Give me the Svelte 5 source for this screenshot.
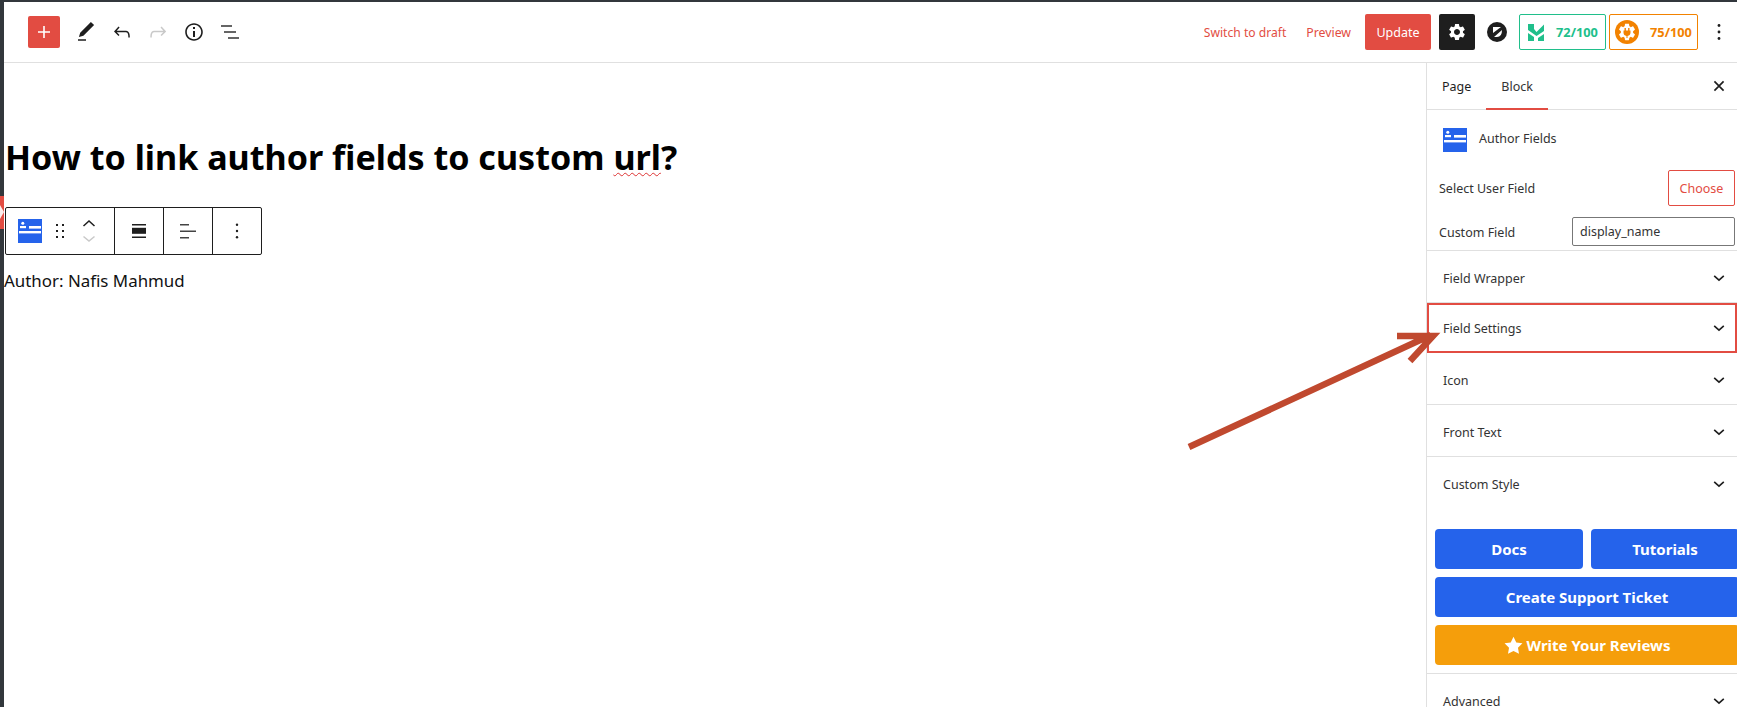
<script>
  const panels = ['Icon', 'Front Text'];
  const gear = 'M19.14 12.94c.04-.3.06-.61.06-.94 0-.32-.02-.64-.07-.94l2.03-1.58c.18-.14.23-.41.12-.61l-1.92-3.32c-.12-.22-.37-.29-.59-.22l-2.39.96c-.5-.38-1.03-.7-1.62-.94l-.36-2.54c-.04-.24-.24-.41-.48-.41h-3.84c-.24 0-.43.17-.47.41l-.36 2.54c-.59.24-1.13.57-1.62.94l-2.39-.96c-.22-.08-.47 0-.59.22L2.74 8.87c-.12.21-.08.47.12.61l2.03 1.58c-.05.3-.09.63-.09.94s.02.64.07.94l-2.03 1.58c-.18.14-.23.41-.12.61l1.92 3.32c.12.22.37.29.59.22l2.39-.96c.5.38 1.03.7 1.62.94l.36 2.54c.05.24.24.41.48.41h3.84c.24 0 .44-.17.47-.41l.36-2.54c.59-.24 1.13-.56 1.62-.94l2.39.96c.22.08.47 0 .59-.22l1.92-3.32c.12-.22.07-.47-.12-.61l-2.01-1.58zM12 15.6c-1.98 0-3.6-1.62-3.6-3.6s1.62-3.6 3.6-3.6 3.6 1.62 3.6 3.6-1.62 3.6-3.6 3.6z';
</script>

{#snippet chevron()}
  <svg class="chev" viewBox="0 0 24 24" width="24" height="24"><path d="M16.800 9.800 12 14.200 7.200 9.800" fill="none" stroke="#1e1e1e" stroke-width="1.600"/></svg>
{/snippet}

{#snippet authorIcon()}
  <svg viewBox="0 0 24 24" width="24" height="24">
    <rect width="24" height="24" fill="#2563eb"/>
    <circle cx="4.800" cy="4.200" r="1.500" fill="#fff"/>
    <rect x="2" y="7" width="6" height="2.200" fill="#fff"/>
    <rect x="11" y="7" width="12" height="2.600" fill="#fff"/>
    <rect x="1" y="12" width="22" height="2.400" fill="#fff"/>
  </svg>
{/snippet}

<div class="app">
  <div class="strip"><div class="wp-mark"><svg viewBox="0 0 4 33" width="4" height="33"><path d="M0 9 4 16 0 23 Z" fill="#fff" opacity=".9"/></svg></div></div>
  <div class="page">
    <header>
      <div class="tools">
        <button class="add" aria-label="Add"><svg viewBox="0 0 24 24" width="24" height="24"><path d="M18 11.200h-5.200V6h-1.600v5.200H6v1.600h5.200V18h1.600v-5.200H18z" fill="#fff"/></svg></button>
        <svg viewBox="0 0 24 24" width="24" height="24"><path d="M20.100 5.100L16.900 2 6.200 12.700l-1.300 4.400 4.500-1.300L20.100 5.100zM4 20.800h8v-1.500H4v1.500z" fill="#1e1e1e"/></svg>
        <svg viewBox="0 0 24 24" width="24" height="24"><path d="M18.300 11.700c-.6-.6-1.400-.9-2.300-.9H6.700l2.900-3.300-1.100-1-4.500 5L8.500 16l1-1-2.700-2.700H16c.5 0 .9.2 1.300.5 1 1 1 3.400 1 4.500v.3h1.500v-.2c0-1.500 0-4.300-1.500-5.700z" fill="#1e1e1e"/></svg>
        <svg viewBox="0 0 24 24" width="24" height="24"><path d="M15.600 6.500l-1.100 1 2.900 3.300H8c-.9 0-1.700.3-2.300.9-1.400 1.500-1.400 4.200-1.400 5.600v.2h1.500v-.3c0-1.100 0-3.500 1-4.500.3-.3.7-.5 1.300-.5h9.200L14.500 15l1.100 1.100 4.600-4.600-4.600-5z" fill="#c9c9c9"/></svg>
        <svg viewBox="0 0 24 24" width="24" height="24"><path d="M12 3.200c-4.800 0-8.800 3.900-8.800 8.800 0 4.800 3.900 8.800 8.800 8.800 4.800 0 8.800-3.900 8.800-8.800 0-4.800-4-8.800-8.800-8.800zm0 16c-4 0-7.200-3.300-7.200-7.200C4.800 8 8 4.800 12 4.800s7.200 3.300 7.200 7.200c0 4-3.200 7.200-7.200 7.200zM11 17h2v-6h-2v6zm0-8h2V7h-2v2z" fill="#1e1e1e"/></svg>
        <svg viewBox="0 0 24 24" width="24" height="24"><path d="M3 5.200h11v1.600H3zM6 11.200h12v1.600H6zM10 17.200h11v1.600H10z" fill="#333"/></svg>
      </div>
      <div class="actions">
        <a class="link draft" href="#draft">Switch to draft</a>
        <a class="link preview" href="#preview">Preview</a>
        <button class="update">Update</button>
        <button class="settings" aria-label="Settings"><svg viewBox="0 0 24 24" width="20" height="20"><path d={gear} fill="#fff"/></svg></button>
        <svg class="zeta" viewBox="0 0 20 20" width="20" height="20">
          <circle cx="10" cy="10" r="10" fill="#1e1e1e"/>
          <path d="M6 5h8L6 11zM15 8q0 7-5 7H7z" fill="#fff"/>
        </svg>
        <div class="score green">
          <svg viewBox="0 0 16 17" width="16" height="17"><path d="M0 0H6V5L8.500 8 16 .5V7L8.500 12 0 6ZM0 9 6 13V17H0ZM10 14 16 10V17H10Z" fill="#20bf8b"/></svg>
          <b>72/100</b>
        </div>
        <div class="score orange">
          <svg viewBox="0 0 24 24" width="24" height="24">
            <circle cx="12" cy="12" r="12" fill="#f28200"/>
            <path d={gear} fill="#fff" transform="translate(1.800 1.800) scale(.85)"/>
            <circle cx="12" cy="12" r="4.600" fill="#fff"/>
            <path d="M9.500 8h1.400v2.400h2.200V8h1.400v2.400h1v2.400a3.500 3.500 0 0 1-3 3.200v2h-1v-2a3.500 3.500 0 0 1-3-3.200v-2.400h1z" fill="#f28200"/>
          </svg>
          <b>75/100</b>
        </div>
        <svg class="kebab" viewBox="0 0 4 20" width="4" height="20"><circle cx="2" cy="3.500" r="1.400"/><circle cx="2" cy="10" r="1.400"/><circle cx="2" cy="16.500" r="1.400"/></svg>
      </div>
    </header>

    <div class="body">
      <main>
        <h1>How to link author fields to custom <span class="misspelt">url</span>?</h1>
        <div class="blocktools">
          <div class="seg first">
            {@render authorIcon()}
            <svg class="drag" viewBox="0 0 10 16" width="10" height="16"><g fill="#1e1e1e"><rect x="1" y="1" width="2" height="2"/><rect x="7" y="1" width="2" height="2"/><rect x="1" y="7" width="2" height="2"/><rect x="7" y="7" width="2" height="2"/><rect x="1" y="13" width="2" height="2"/><rect x="7" y="13" width="2" height="2"/></g></svg>
            <svg class="mover" viewBox="0 0 14 24" width="14" height="24"><path d="M1.500 7 7 2l5.500 5" fill="none" stroke="#1e1e1e" stroke-width="1.500"/><path d="M1.500 17.500 7 22l5.500-4.500" fill="none" stroke="#c9c9c9" stroke-width="1.500"/></svg>
          </div>
          <div class="seg"><svg viewBox="0 0 14 16" width="14" height="16"><g fill="#1e1e1e"><rect width="14" height="1.500" y="1"/><rect width="14" height="6" y="4.800"/><rect width="14" height="1.500" y="13.500"/></g></svg></div>
          <div class="seg"><svg viewBox="0 0 16 16" width="16" height="16"><g fill="#444"><rect width="9" height="1.500" y="1"/><rect width="16" height="1.500" y="7.500"/><rect width="9" height="1.500" y="14"/></g></svg></div>
          <div class="seg"><svg class="kebab" viewBox="0 0 4 16" width="4" height="16"><circle cx="2" cy="1.700" r="1.200"/><circle cx="2" cy="8" r="1.200"/><circle cx="2" cy="14.300" r="1.200"/></svg></div>
        </div>
        <p class="author">Author: Nafis Mahmud</p>
      </main>

      <aside>
        <div class="tabs">
          <span class="tab">Page</span>
          <span class="tab active">Block</span>
          <svg class="close" viewBox="0 0 24 24" width="20" height="20"><path d="M6.500 6.500l11 11M17.500 6.500l-11 11" stroke="#1e1e1e" stroke-width="2" fill="none"/></svg>
        </div>
        <div class="summary">
          <div class="blockname">{@render authorIcon()}<span>Author Fields</span></div>
          <div class="field select"><span>Select User Field</span><button class="choose">Choose</button></div>
          <div class="field custom"><span class="custom-label">Custom Field</span><div class="input">display_name</div></div>
        </div>
        <div class="panel"><span>Field Wrapper</span>{@render chevron()}</div>
        <div class="panel highlighted"><span>Field Settings</span>{@render chevron()}</div>
        {#each panels as p}
          <div class="panel"><span>{p}</span>{@render chevron()}</div>
        {/each}
        <div class="promo">
          <div class="panel plain"><span>Custom Style</span>{@render chevron()}</div>
          <div class="btns">
            <button class="cta">Docs</button>
            <button class="cta">Tutorials</button>
            <button class="cta wide">Create Support Ticket</button>
            <button class="cta wide amber"><svg viewBox="0 0 20 20" width="19" height="19"><path d="M10 .8l2.900 6 6.500.9-4.700 4.600 1.100 6.500L10 15.700l-5.800 3.100 1.100-6.500L.6 7.700l6.500-.9z" fill="#fff"/></svg>Write Your Reviews</button>
          </div>
        </div>
        <div class="panel adv"><span>Advanced</span>{@render chevron()}</div>
      </aside>
    </div>
  </div>

  <svg class="arrow" viewBox="0 0 1737 707" width="1737" height="707">
    <path d="M1189 447 L1431 335 M1397 336 L1433 336 L1410 361" fill="none" stroke="#c0492f" stroke-width="6.500"/>
  </svg>
</div>

<style>
  :global(body) { margin: 0; background: #fff; }
  .app {
    position: relative;
    display: flex;
    width: 1737px;
    height: 707px;
    overflow: hidden;
    font-family: "Noto Sans", sans-serif;
    color: #1e1e1e;
  }
  .strip { width: 4px; flex: none; background: #32373c; padding-top: 196px; box-sizing: border-box; }
  .wp-mark { height: 33px; background: #e24c42; }
  .wp-mark svg { display: block; }
  .page { flex: 1; min-width: 0; border-top: 2px solid #32373c; display: flex; flex-direction: column; }
  header {
    height: 61px;
    flex: none;
    box-sizing: border-box;
    border-bottom: 1px solid #e0e0e0;
    display: flex;
    align-items: center;
    justify-content: space-between;
  }
  header svg { display: block; }
  .tools { display: flex; align-items: center; gap: 12px; padding-left: 24px; }
  .add { width: 32px; height: 32px; border: 0; padding: 4px; margin-right: 2px; background: #e24c42; border-radius: 2px; }
  .actions { display: flex; align-items: center; height: 36px; }
  .link { color: #e24c42; text-decoration: none; font-size: 12.100px; }
  .draft { margin-right: 20px; }
  .preview { margin-right: 14px; font-size: 12.300px; }
  button { font-family: inherit; cursor: pointer; }
  .update { width: 66px; height: 36px; border: 0; border-radius: 2px; background: #e24c42; color: #fff; font-size: 12.500px; padding: 0; margin-right: 8px; }
  .settings { width: 36px; height: 36px; border: 0; border-radius: 2px; background: #1e1e1e; padding: 0; display: flex; align-items: center; justify-content: center; margin-right: 12px; }
  .zeta { margin-right: 12px; }
  .score { height: 36px; box-sizing: border-box; border: 1px solid; border-radius: 2px; display: flex; align-items: center; font-size: 12.800px; }
  .score b { font-weight: 700; }
  .green { width: 87px; border-color: #20bf8b; color: #20bf8b; padding-left: 8px; gap: 12px; margin-right: 3px; }
  .orange { width: 89px; border-color: #f28200; color: #f28200; padding-left: 5px; gap: 11px; }
  .kebab { fill: #1e1e1e; }
  .actions > .kebab { margin-left: 19px; margin-right: 16px; }

  .body { flex: 1; display: flex; min-height: 0; }
  main { flex: 1; min-width: 0; }
  h1 { margin: 72px 0 0 1px; font-size: 34.100px; line-height: 44px; font-weight: 700; color: #000; }
  .misspelt { text-decoration: underline wavy #d33 1px; text-underline-offset: 2px; }
  .blocktools {
    margin: 28px 0 0 1px;
    width: 257px;
    height: 48px;
    box-sizing: border-box;
    border: 1px solid #1e1e1e;
    border-radius: 2px;
    display: grid;
    grid-template-columns: 108px 49px 49px 1fr;
  }
  .seg { display: flex; align-items: center; justify-content: center; border-left: 1px solid #1e1e1e; }
  .seg:first-child { border-left: 0; }
  .seg.first { justify-content: flex-start; padding-left: 12px; }
  .seg svg { display: block; }
  .drag { margin-left: 13px; }
  .mover { margin-left: 17px; }
  .author { margin: 13px 0 0; font-size: 16.900px; line-height: 26px; color: #111; }

  aside {
    width: 311px;
    flex: none;
    box-sizing: border-box;
    border-left: 1px solid #e0e0e0;
    font-size: 12.500px;
    color: #333;
    overflow: hidden;
  }
  .tabs { height: 47px; box-sizing: border-box; border-bottom: 1px solid #e0e0e0; display: flex; align-items: center; padding-left: 15px; position: relative; }
  .tab { color: #1e1e1e; line-height: 46px; padding-top: 1px; }
  .tab.active { margin-left: 30px; position: relative; color: #333; }
  .tab.active::after { content: ""; position: absolute; left: -15px; right: -15px; bottom: 0; height: 2px; background: #e24c42; }
  .close { margin-left: auto; margin-right: 8px; }
  .summary { height: 141px; box-sizing: border-box; border-bottom: 1px solid #e0e0e0; padding-top: 18px; }
  .blockname { display: flex; align-items: center; gap: 12px; padding-left: 16px; }
  .blockname svg { display: block; }
  .blockname span { padding-bottom: 3px; }
  .field { display: flex; align-items: center; justify-content: space-between; padding: 0 2px 0 12px; }
  .select { margin-top: 18px; height: 36px; }
  .choose { width: 67px; height: 36px; border: 1px solid #e24c42; border-radius: 2px; background: #fff; color: #e24c42; font-size: 12.500px; padding: 0; }
  .custom { margin-top: 11px; height: 29px; }
  .custom-label { padding-top: 2px; }
  .input { width: 163px; height: 29px; box-sizing: border-box; border: 1px solid #777; border-radius: 2px; padding-left: 7px; line-height: 28px; color: #333; }
  .panel {
    height: 52px;
    box-sizing: border-box;
    border-bottom: 1px solid #e0e0e0;
    display: flex;
    align-items: center;
    justify-content: space-between;
    padding: 3px 6px 0 16px;
    color: #333;
  }
  .panel.highlighted { height: 50px; border: 2px solid #e24c42; padding-left: 14px; padding-right: 4px; padding-top: 1px; }
  .panel.plain { border-bottom: 0; }
  .chev { display: block; margin-top: -1px; }
  .promo { height: 217px; box-sizing: border-box; border-bottom: 1px solid #e0e0e0; }
  .btns { margin: 20px 0 0 8px; width: 304px; display: grid; grid-template-columns: 148px 148px; gap: 8px; }
  .cta { height: 40px; border: 0; border-radius: 4px; background: #2563eb; color: #fff; font-size: 15px; font-weight: 700; padding: 0; display: flex; align-items: center; justify-content: center; gap: 4px; }
  .wide { grid-column: 1 / 3; }
  .amber { background: #f59e0b; }
  .arrow { position: absolute; left: 0; top: 0; pointer-events: none; }
</style>
